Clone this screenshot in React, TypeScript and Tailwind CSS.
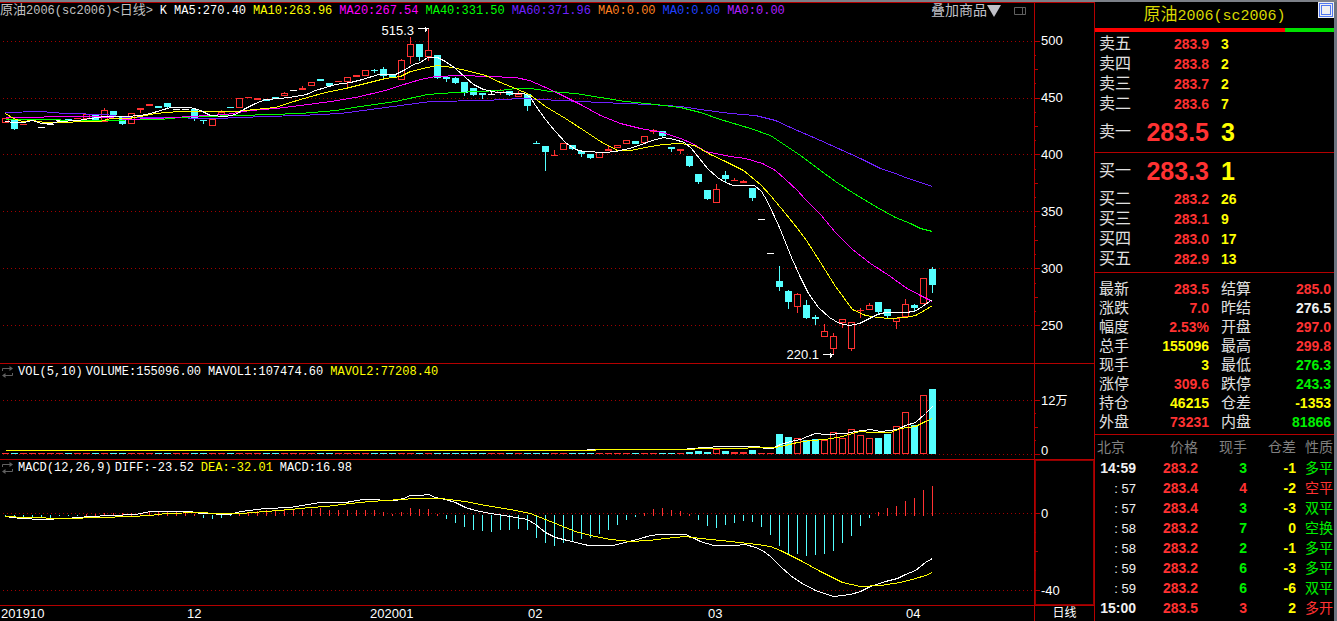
type Kind = 'up' | 'down' | 'flat'
// kind, body top, body bottom, high, low
type Candle = [Kind, number, number, number?, number?]

const RED = '#ff3232'
const CYAN = '#54ffff'

const candles: Candle[] = [
  ['up', 118, 122], ['down', 120, 129], ['up', 124, 124], ['flat', 120, 120], ['flat', 127, 127],
  ['flat', 124, 124], ['flat', 120, 120], ['down', 119, 120], ['up', 118, 118], ['up', 114, 118],
  ['down', 115, 120], ['up', 110, 121, 107], ['down', 111, 115], ['down', 116, 124], ['up', 113, 123, 112],
  ['up', 108, 109, 107, 112], ['up', 104, 105], ['down', 106, 107, 105], ['down', 103, 107], ['flat', 109, 109],
  ['flat', 109, 109], ['down', 109, 118, 109, 120], ['down', 120, 120, 119, 123], ['up', 119, 125], ['up', 112, 114, 109],
  ['down', 107, 107], ['up', 98, 107, 97], ['up', 97, 97], ['up', 98, 99], ['down', 99, 100, 98],
  ['down', 97, 98, 96], ['up', 93, 95, 91], ['flat', 90, 90], ['up', 88, 89, 85], ['up', 82, 85],
  ['down', 79, 80], ['down', 83, 85], ['up', 81, 81], ['up', 77, 81, 76, 86], ['up', 75, 76, 74],
  ['up', 70, 75], ['down', 70, 70, 68, 72], ['down', 69, 76, 66, 77], ['down', 74, 76], ['up', 60, 79, 58],
  ['up', 44, 56, 36, 63], ['down', 44, 57, 44, 60], ['up', 50, 56, 28, 60], ['down', 55, 78], ['down', 77, 78, 76, 81],
  ['down', 78, 83, 76], ['down', 82, 93, 81, 95], ['down', 88, 95, 87], ['down', 93, 94, 92, 98], ['flat', 94, 94, 90],
  ['up', 90, 92, 88, 94], ['down', 91, 95, 90], ['up', 94, 96, 90], ['down', 94, 106, 94, 110], ['down', 143, 143, 140],
  ['down', 146, 152, 145, 170], ['up', 155, 155, 149], ['up', 143, 149, 142], ['down', 145, 149], ['down', 151, 153, 150, 156],
  ['down', 154, 158, 153], ['up', 152, 157], ['up', 149, 150, 144], ['up', 145, 147], ['up', 140, 143],
  ['down', 141, 143, 140], ['up', 136, 142, 135], ['up', 130, 131, 128, 133], ['down', 131, 136, 131, 137], ['down', 147, 148, 146, 151],
  ['up', 149, 150, 148, 153], ['down', 156, 166], ['down', 174, 182, 174, 183], ['down', 190, 199, 189], ['up', 189, 202, 183],
  ['down', 175, 179, 170, 182], ['up', 180, 180, 177], ['up', 181, 182, 179], ['down', 188, 198, 188, 200], ['flat', 219, 219],
  ['flat', 253, 253], ['down', 281, 287, 265, 290], ['down', 291, 302, 289, 308], ['up', 294, 306, 292, 312], ['down', 305, 318, 299],
  ['down', 317, 318, 314, 324], ['up', 331, 336, 323], ['up', 336, 348, 332, 354], ['up', 319, 322, 319, 327], ['up', 322, 348, 321, 350],
  ['up', 310, 310, 307, 317], ['up', 305, 309, 302], ['down', 302, 312, 302, 313], ['down', 309, 316, 309, 317], ['up', 318, 321, 317, 328],
  ['up', 304, 316, 298], ['down', 305, 307, 303, 310], ['up', 278, 303], ['down', 269, 285, 266, 292],
]

// bar tops from index 76 on, everything before is a one pixel dash
const volumeTops = [
  452, 451, 452, 449, 451, 452, 452, 450, 453, 453, 434, 437, 438, 440, 439, 440, 432, 438, 429, 435,
  438, 438, 434, 426, 412, 425, 395, 389,
]

const macd = [
  516, 517, 517, 517, 517, 517, 515, 515, 515, 514, 514, 513, 513, 513, 513, 513, 511, 511, 511, 512,
  512, 514, 517, 518, 517, 515, 513, 512, 511, 510, 510, 510, 510, 510, 509, 508, 510, 510, 510, 510,
  510, 510, 512, 514, 512, 508, 509, 509, 514, 518, 522, 526, 529, 530, 531, 529, 529, 528, 529, 537,
  542, 545, 542, 540, 538, 537, 533, 529, 524, 519, 516, 513, 509, 508, 510, 511, 514, 519, 525, 527,
  524, 522, 520, 521, 526, 534, 545, 553, 553, 555, 554, 553, 550, 542, 535, 525, 517, 512, 508, 506,
  501, 498, 490, 486,
]

const maLines = [
  {
    color: '#7020ff',
    points: '5,112 40,111 65,113 105,114 125,117 160,117 215,118 265,116 300,115 340,113 370,109 400,105 430,101 485,100 520,98 560,100 600,102 650,104 680,106 700,109 730,113 755,115 775,120 790,127 820,140 840,149 860,158 880,168 895,173 905,177 920,182 932,186',
  },
  {
    color: '#00ff00',
    points: '5,119 30,119 90,120 160,119 180,117 200,116 240,115 300,113 335,110 360,106 395,101 427,94 455,92 500,90 515,88 530,88 550,91 575,93 600,97 625,101 655,104 680,107 700,112 720,119 750,128 770,135 785,145 800,155 820,170 835,181 852,192 875,206 895,217 910,223 920,228 932,231',
  },
  {
    color: '#ff00ff',
    points: '5,117 38,117 50,116 90,116 110,117 125,119 155,118 190,116 225,114 250,110 275,108 300,105 330,101 355,97 385,90 400,85 420,79 435,76 460,75 515,77 529,80 543,86 560,94 580,104 600,115 620,123 640,128 662,132 680,138 692,143 705,151 730,156 745,158 762,163 775,170 785,179 797,190 805,199 820,214 835,232 852,249 870,263 890,276 905,287 920,295 932,301',
  },
  {
    color: '#ffff00',
    points: '5,113 13,118 22,121 32,120 45,122 100,121 110,118 128,118 140,116 155,113 178,111 195,111 235,111 255,109 275,107 290,102 307,97 325,92 345,88 365,83 385,78 400,76 410,71 427,67 437,65 452,67 470,71 485,75 500,82 515,88 529,94 545,106 565,118 585,131 600,141 617,150 630,150 645,147 662,144 680,143 694,145 710,154 725,161 743,170 760,184 770,195 785,213 797,228 806,240 820,262 835,286 852,309 865,315 878,317 888,318 905,317 915,315 924,310 932,305',
  },
  {
    color: '#ffffff',
    points: '5,121 14,122 23,122 32,120 41,123 50,123 59,121 77,120 90,118 104,116 125,116 140,115 150,113 160,110 170,107 190,107 200,110 210,115 225,116 235,114 245,108 255,103 265,99 280,98 295,96 306,94 315,90 325,87 335,84 350,82 362,79 378,74 395,74 405,69 413,64 420,62 427,57 437,57 445,61 455,68 465,77 473,84 483,89 497,92 524,93 530,97 535,105 545,119 555,131 565,142 575,149 583,151 605,152 615,151 629,148 641,144 652,140 663,137 674,139 684,142 691,148 699,158 707,168 717,177 725,182 733,185 754,185 761,191 767,201 773,214 779,227 785,242 791,257 800,277 808,293 818,307 829,317 839,323 849,325 859,323 869,318 877,314 885,312 904,312 914,311 922,306 932,299',
  },
]

const legend = [
  { text: 'MA5:270.40', cls: 'text-white' },
  { text: 'MA10:263.96', cls: 'text-[#ffff00]' },
  { text: 'MA20:267.54', cls: 'text-[#ff00ff]' },
  { text: 'MA40:331.50', cls: 'text-[#00ff00]' },
  { text: 'MA60:371.96', cls: 'text-[#7020ff]' },
  { text: 'MA0:0.00', cls: 'text-[#ff8020]' },
  { text: 'MA0:0.00', cls: 'text-[#2040ff]' },
  { text: 'MA0:0.00', cls: 'text-[#b020ff]' },
]

const asks = [
  ['卖五', '283.9', '3'],
  ['卖四', '283.8', '2'],
  ['卖三', '283.7', '2'],
  ['卖二', '283.6', '7'],
]

const bids = [
  ['买二', '283.2', '26'],
  ['买三', '283.1', '9'],
  ['买四', '283.0', '17'],
  ['买五', '282.9', '13'],
]

const R = 'text-[#ff3232]'
const G = 'text-[#00f000]'
const Y = 'text-[#ffff00]'
const W = 'text-[#f0f0f0]'

const stats = [
  ['最新', '283.5', R], ['结算', '285.0', R],
  ['涨跌', '7.0', R], ['昨结', '276.5', W],
  ['幅度', '2.53%', R], ['开盘', '297.0', R],
  ['总手', '155096', Y], ['最高', '299.8', R],
  ['现手', '3', Y], ['最低', '276.3', G],
  ['涨停', '309.6', R], ['跌停', '243.3', G],
  ['持仓', '46215', Y], ['仓差', '-1353', Y],
  ['外盘', '73231', R], ['内盘', '81866', G],
]

const trades = [
  { time: '14:59', price: '283.2', vol: '3', diff: '-1', type: '多平', cls: G },
  { time: ': 57', price: '283.4', vol: '4', diff: '-2', type: '空平', cls: R },
  { time: ': 57', price: '283.4', vol: '3', diff: '-3', type: '双平', cls: G },
  { time: ': 58', price: '283.2', vol: '7', diff: '0', type: '空换', cls: G },
  { time: ': 58', price: '283.2', vol: '2', diff: '-1', type: '多平', cls: G },
  { time: ': 59', price: '283.2', vol: '6', diff: '-3', type: '多平', cls: G },
  { time: ': 59', price: '283.2', vol: '6', diff: '-6', type: '双平', cls: G },
  { time: '15:00', price: '283.5', vol: '3', diff: '2', type: '多开', cls: R },
]

const MONO = "font-['Liberation_Mono','Noto_Sans_CJK_SC',monospace] text-[12px] leading-4 whitespace-nowrap"

const barX = (i: number) => 5 + i * 9

function GridLine({ y }: { y: number }) {
  return <path d={`M2.5 ${y}H1033.5`} stroke="#a00000" strokeDasharray="1 3" />
}

function Line({ points, color }: { points: string; color: string }) {
  return <polyline points={points} stroke={color} />
}

function Plot({ top, height, label, children }: { top: number; height: number; label: string; children: React.ReactNode }) {
  return (
    <svg
      viewBox={`0 ${top} 1034 ${height}`}
      height={height}
      preserveAspectRatio="none"
      className="block w-full"
      role="img"
      aria-label={label}
    >
      <g transform="translate(0.5 0.5)" fill="none" shapeRendering="crispEdges">
        {children}
      </g>
    </svg>
  )
}

function Ticks({ top, height, major, mid, minor }: { top: number; height: number; major: number[]; mid: number[]; minor: number[] }) {
  return (
    <svg viewBox={`0 ${top} 6 ${height}`} width="6" height={height} className="block shrink-0" aria-hidden="true">
      <g transform="translate(0 0.5)" stroke="#b40000" shapeRendering="crispEdges">
        {major.map((y) => <path key={y} d={`M0 ${y}h5`} />)}
        {mid.map((y) => <path key={y} d={`M0 ${y}h3`} />)}
        {minor.map((y) => <path key={y} d={`M0 ${y}h1`} />)}
      </g>
    </svg>
  )
}

function CandleBar({ candle, x }: { candle: Candle; x: number }) {
  const [kind, top, rawBottom, high = top, low = rawBottom] = candle
  const bottom = kind === 'down' && rawBottom - top > 3 ? rawBottom - 1 : rawBottom
  const color = kind === 'up' ? RED : kind === 'down' ? CYAN : '#ffffff'
  return (
    <g stroke={color}>
      {high < top && <path d={`M${x} ${high}V${top}`} />}
      {low > bottom && <path d={`M${x} ${bottom}V${low + 0.5}`} />}
      {top === bottom
        ? <path d={`M${x - 3.5} ${top}h7`} />
        : <path d={`M${x - 3} ${top}h6V${bottom}h-6z`} fill={kind === 'down' ? CYAN : 'none'} />}
    </g>
  )
}

function Swap() {
  return (
    <svg width="11" height="12" viewBox="0 0 11 12" className="-mr-0.5 shrink-0" aria-hidden="true">
      <path d="M.5 5V2.5H8M10.5 7v2.5H3" fill="none" stroke="#606060" />
      <path d="M7.5 0 11 2.5 7.5 5zM3.500 7 0 9.500 3.500 12z" fill="#606060" />
    </svg>
  )
}

function QuoteRow({ label, price, vol, big }: { label: string; price: string; vol: string; big?: boolean }) {
  return (
    <div className={`grid grid-cols-2 items-center gap-3 pl-1 pr-[3px] ${big ? 'h-9' : 'h-5'}`}>
      <div className="flex items-center justify-between">
        <span className="text-[16px] text-[#e0e0e0]">{label}</span>
        <span className={`font-bold text-[#ff3232] ${big ? 'text-[25px]' : 'text-[14px]'}`}>{price}</span>
      </div>
      <span className={`font-bold text-[#ffff00] ${big ? 'text-[25px]' : 'text-[14px]'}`}>{vol}</span>
    </div>
  )
}

function MainChart() {
  return (
    <section className="flex border-t border-[#b40000]">
      <div className="min-w-0 flex-1">
        <div className={`flex h-5 items-center gap-[7px] pr-2 pb-1 ${MONO}`}>
          <h1 className="text-[#c0c0c0]">
            <span className="text-[13px]">原油</span>2006(sc2006)&lt;<span className="text-[13px]">日线</span>&gt;
          </h1>
          <span className="text-white">K</span>
          {legend.map((l, i) => <span key={i} className={l.cls}>{l.text}</span>)}
          <button type="button" className="ml-auto flex items-center text-[14px] text-[#c0c0c8]">
            叠加商品
            <svg width="14" height="12" viewBox="0 0 14 12" aria-hidden="true"><path d="M0 0h14L7 12z" fill="#c0c0c8" /></svg>
          </button>
          <button type="button" aria-label="侧栏" className="ml-1.5">
            <svg width="12" height="8" viewBox="0 0 12 8" fill="none" stroke="#606060" className="block" aria-hidden="true">
              <path d="M.5.5h11v7H.5zM8.500.5v7" />
            </svg>
          </button>
        </div>
        <Plot top={23} height={340} label="日线">
          {[41, 98, 154, 211, 268, 325].map((y) => <GridLine key={y} y={y} />)}
          {candles.map((c, i) => <CandleBar key={i} candle={c} x={barX(i)} />)}
          {maLines.map((l) => <Line key={l.color} {...l} />)}
          <g stroke="#fff">
            <path d="M417 28H428M425 26v5M426 27v3" />
            <path d="M822 354H833M830 352v5M831 353v3" />
          </g>
          <g fill="#fff" className="font-['Liberation_Sans',sans-serif] text-[13px]">
            <text x="381" y="34">515.3</text>
            <text x="786" y="358">220.1</text>
          </g>
        </Plot>
      </div>
      <div className="flex w-[60px] shrink-0 border-l border-[#b40000]">
        <Ticks
          top={3}
          height={360}
          major={[41, 98, 154, 211, 268, 325]}
          mid={[69, 126, 183, 240, 297]}
          minor={[55, 83, 112, 140, 169, 197, 226, 254, 283, 311]}
        />
        <div className="pt-[9px]">
          {[500, 450, 400, 350, 300, 250].map((v) => (
            <div key={v} className="flex h-[57px] items-center">{v}</div>
          ))}
        </div>
      </div>
    </section>
  )
}

function VolumeChart() {
  return (
    <section className="flex border-t border-[#b40000]">
      <div className="min-w-0 flex-1">
        <div className={`flex h-4 items-center gap-[7px] pl-0.5 text-white ${MONO}`}>
          <Swap />
          <span>VOL(5,10)</span>
          <span className="-ml-1">VOLUME:155096.00</span>
          <span>MAVOL1:107474.60</span>
          <span className="text-[#ffff00]">MAVOL2:77208.40</span>
        </div>
        <Plot top={380} height={79} label="VOL">
          <GridLine y={400} />
          <GridLine y={454} />
          {candles.map(([kind], i) => {
            const top = i < 76 ? 453 : volumeTops[i - 76]
            const x = barX(i)
            const color = kind === 'down' ? CYAN : RED
            return top === 453
              ? <path key={i} d={`M${x - 3.5} 453h7`} stroke={color} />
              : <path key={i} d={`M${x - 3} ${top}h6V453h-6z`} stroke={color} fill={kind === 'down' ? CYAN : 'none'} />
          })}
          <Line
            color="#ffffff"
            points="5,450 585,450 588,449 684,449 690,448 705,447 721,446 757,446 765,448 772,448 780,444 790,441 800,439 807,436 815,433 825,434 845,433 855,431 870,429 880,431 897,429 905,425 915,422 925,413 932,406"
          />
          <Line
            color="#ffff00"
            points="5,450 594,450 596,449 690,449 700,448 720,448 775,447 785,445 797,442 810,440 825,439 842,436 855,432 860,431 870,432 890,432 900,428 915,426 925,421 932,418"
          />
        </Plot>
      </div>
      <div className="flex w-[60px] shrink-0 border-l border-[#b40000]">
        <Ticks top={364} height={95} major={[400, 454]} mid={[427]} minor={[413, 440]} />
        <div className="flex flex-col justify-between pt-[29px]">
          <div className="leading-4">12<span className="text-[12px]">万</span></div>
          <div className="leading-4">0</div>
        </div>
      </div>
    </section>
  )
}

function MacdChart() {
  return (
    <section className="flex border-t border-[#b40000]">
      <div className="min-w-0 flex-1">
        <div className={`flex h-4 items-center gap-[7px] pl-0.5 text-white ${MONO}`}>
          <Swap />
          <span>MACD(12,26,9)</span>
          <span className="-ml-1">DIFF:-23.52</span>
          <span className="text-[#ffff00]">DEA:-32.01</span>
          <span>MACD:16.98</span>
        </div>
        <Plot top={476} height={129} label="MACD">
          <GridLine y={513} />
          <GridLine y={590} />
          {macd.map((y, i) => (
            <path
              key={i}
              d={y < 515 ? `M${barX(i)} ${y - 0.5}V515.5` : `M${barX(i)} 514.5V${y + 0.5}`}
              stroke={y < 515 ? RED : CYAN}
            />
          ))}
          <Line
            color="#ffffff"
            points="5,516 20,518 42,519 65,518 90,516 110,515 135,514 150,511 165,511 190,511 200,513 230,514 240,511 265,508 290,507 320,502 345,502 363,499 395,500 403,498 410,495 420,495 428,494 435,497 445,499 455,502 465,507 475,510 490,513 510,516 527,519 535,524 545,532 555,537 567,540 588,545 612,545 625,542 640,538 650,535 660,534 685,534 692,537 700,541 713,545 735,545 745,544 755,547 762,550 770,556 780,566 790,575 800,582 815,590 833,596 850,594 860,591 870,586 885,581 897,578 905,574 915,570 925,562 932,558"
          />
          <Line
            color="#ffff00"
            points="5,516 25,517 65,518 100,517 130,516 150,515 165,513 200,512 215,513 240,513 265,511 290,509 310,507 325,506 350,503 370,501 400,499 415,498 440,498 465,501 485,505 510,509 530,513 545,519 560,525 575,531 590,535 610,539 630,541 648,540 665,538 685,536 700,538 730,541 757,544 770,546 780,550 800,560 820,571 842,582 860,586 880,585 900,582 915,578 925,575 932,572"
          />
        </Plot>
      </div>
      <div className="flex w-[60px] shrink-0 border-l border-[#b40000] shadow-[inset_0_0_0_1px_#900000]">
        <Ticks top={460} height={145} major={[513, 590]} mid={[551]} minor={[532, 570]} />
        <div className="flex flex-col justify-between pt-[46px] pb-1.5">
          <div className="leading-4">0</div>
          <div className="leading-4">-40</div>
        </div>
      </div>
    </section>
  )
}

function DateBar() {
  return (
    <div className="flex flex-1 border-t border-[#b40000] leading-[15px]">
      <div className="grid min-w-0 flex-1 grid-cols-[186fr_183fr_158fr_180fr_198fr_128fr] pl-px">
        {['201910', '12', '202001', '02', '03', '04'].map((d) => <span key={d}>{d}</span>)}
      </div>
      <button type="button" className="w-[60px] shrink-0 border-l border-[#b40000] text-[12px]">日线</button>
    </div>
  )
}

function QuotePanel() {
  return (
    <aside className="w-[243px] shrink-0 border-l border-[#b40000] border-r-3 border-r-[#6c7480] leading-none">
      <div className="relative flex h-[26px] items-center justify-center text-[#d8d800]">
        <h2 className="font-['Liberation_Mono','Noto_Sans_CJK_SC',monospace] text-[15px]">
          <span className="text-[17px]">原油</span>2006(sc2006)
        </h2>
        <button type="button" aria-label="最大化" className="absolute top-0 right-0">
          <svg width="16" height="16" viewBox="0 0 16 16" className="block" shapeRendering="crispEdges" aria-hidden="true">
            <path d="M0 0h16v16H0z" fill="#f0f0f0" />
            <path d="M1.500 1.500h13v13h-13z" fill="none" stroke="#5078f0" />
            <path d="M3.500 3.500h9v9h-9z" fill="#f0f0f0" stroke="#5078f0" />
          </svg>
        </button>
      </div>
      <div className="flex h-1">
        <div className="flex-[190] bg-[#ff0000]" />
        <div className="flex-[49] bg-[#00e000]" />
      </div>

      <div className="border-b border-[#b40000] pt-0.5 pb-0.5">
        {asks.map(([label, price, vol]) => <QuoteRow key={label} label={label} price={price} vol={vol} />)}
        <QuoteRow label="卖一" price="283.5" vol="3" big />
      </div>
      <div className="border-b border-[#b40000] pb-[3px]">
        <QuoteRow label="买一" price="283.3" vol="1" big />
        {bids.map(([label, price, vol]) => <QuoteRow key={label} label={label} price={price} vol={vol} />)}
      </div>

      <dl className="grid grid-cols-2 gap-x-3 border-b border-[#b40000] pt-1.5 pr-[3px] pb-[3px] pl-1">
        {stats.map(([label, value, cls]) => (
          <div key={label} className="flex h-[19px] items-center justify-between">
            <dt className="text-[15px] text-[#e0e0e0]">{label}</dt>
            <dd className={`text-[14px] font-bold ${cls}`}>{value}</dd>
          </div>
        ))}
      </dl>

      <table className="w-full table-fixed text-right text-[14px] font-bold">
        <colgroup>
          <col className="w-[41px]" />
          <col className="w-[62px]" />
          <col className="w-[49px]" />
          <col className="w-[49px]" />
          <col />
        </colgroup>
        <thead>
          <tr className="h-[23px] text-[#808080]">
            <th className="p-0 pl-0.5 text-left font-normal">北京</th>
            <th className="p-0 font-normal">价格</th>
            <th className="p-0 font-normal">现手</th>
            <th className="p-0 font-normal">仓差</th>
            <th className="p-0 pr-px font-normal">性质</th>
          </tr>
        </thead>
        <tbody>
          {trades.map((t, i) => (
            <tr key={i} className="h-5">
              <td className={`p-0 text-[#f0f0f0] ${t.time.startsWith(':') ? 'text-[13px] font-normal' : ''}`}>{t.time}</td>
              <td className="p-0 text-[#ff3232]">{t.price}</td>
              <td className={`p-0 ${t.cls}`}>{t.vol}</td>
              <td className="p-0 text-[#ffff00]">{t.diff}</td>
              <td className={`p-0 pr-px font-normal ${t.cls}`}>{t.type}</td>
            </tr>
          ))}
        </tbody>
      </table>
    </aside>
  )
}

export default function App() {
  return (
    <div className="flex min-h-screen border-t-2 border-[#7c8088] bg-black font-['Liberation_Sans','Noto_Sans_CJK_SC',sans-serif] text-[13px] text-white">
      <main className="flex min-w-0 flex-1 flex-col">
        <MainChart />
        <VolumeChart />
        <MacdChart />
        <DateBar />
      </main>
      <QuotePanel />
    </div>
  )
}
